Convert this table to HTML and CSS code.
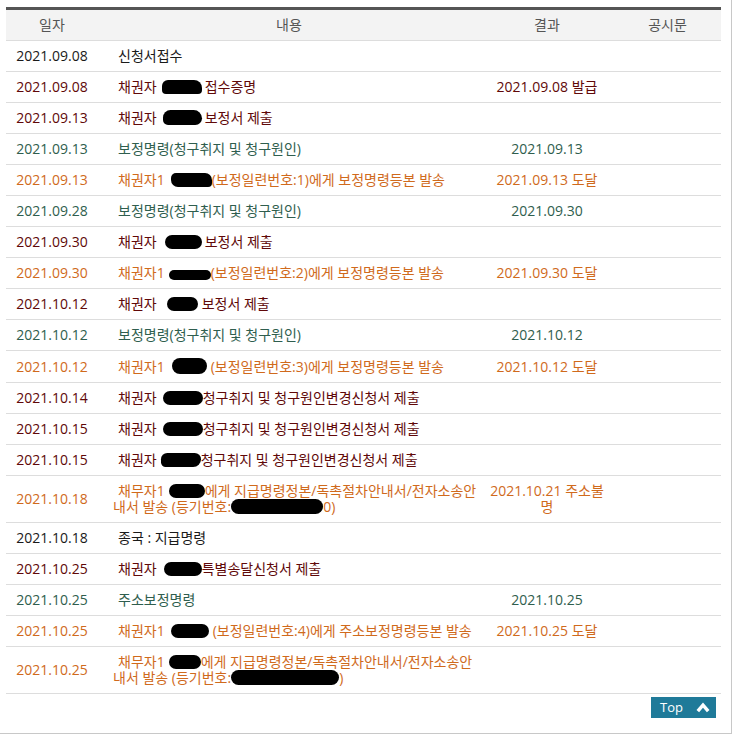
FILE: index.html
```html
<!DOCTYPE html>
<html lang="ko">
<head>
<meta charset="utf-8">
<title>진행내용</title>
<link rel="stylesheet" href="styles.css">
</head>
<body>
<div class="wrap">
  <table class="prog">
    <colgroup>
      <col class="c-date"><col class="c-text"><col class="c-res"><col class="c-doc">
    </colgroup>
    <thead>
      <tr><th>일자</th><th>내용</th><th>결과</th><th>공시문</th></tr>
    </thead>
    <tbody>
      <tr class="k-black"><td>2021.09.08</td><td class="txt">신청서접수</td><td></td><td></td></tr>
      <tr class="k-red"><td>2021.09.08</td><td class="txt">채권자<span class="blob b1"></span>접수증명</td><td>2021.09.08 발급</td><td></td></tr>
      <tr class="k-red"><td>2021.09.13</td><td class="txt">채권자<span class="blob b2"></span>보정서 제출</td><td></td><td></td></tr>
      <tr class="k-green"><td>2021.09.13</td><td class="txt">보정명령(청구취지 및 청구원인)</td><td>2021.09.13</td><td></td></tr>
      <tr class="k-orange"><td>2021.09.13</td><td class="txt">채권자1<span class="blob b3"></span>(보정일련번호:1)에게 보정명령등본 발송</td><td>2021.09.13 도달</td><td></td></tr>
      <tr class="k-green"><td>2021.09.28</td><td class="txt">보정명령(청구취지 및 청구원인)</td><td>2021.09.30</td><td></td></tr>
      <tr class="k-red"><td>2021.09.30</td><td class="txt">채권자<span class="blob b4"></span>보정서 제출</td><td></td><td></td></tr>
      <tr class="k-orange"><td>2021.09.30</td><td class="txt">채권자1<span class="blob b5"></span>(보정일련번호:2)에게 보정명령등본 발송</td><td>2021.09.30 도달</td><td></td></tr>
      <tr class="k-red"><td>2021.10.12</td><td class="txt">채권자<span class="blob b6"></span>보정서 제출</td><td></td><td></td></tr>
      <tr class="k-green"><td>2021.10.12</td><td class="txt">보정명령(청구취지 및 청구원인)</td><td>2021.10.12</td><td></td></tr>
      <tr class="k-orange"><td>2021.10.12</td><td class="txt">채권자1<span class="blob b7"></span>(보정일련번호:3)에게 보정명령등본 발송</td><td>2021.10.12 도달</td><td></td></tr>
      <tr class="k-red"><td>2021.10.14</td><td class="txt">채권자<span class="blob b8"></span>청구취지 및 청구원인변경신청서 제출</td><td></td><td></td></tr>
      <tr class="k-red"><td>2021.10.15</td><td class="txt">채권자<span class="blob b8"></span>청구취지 및 청구원인변경신청서 제출</td><td></td><td></td></tr>
      <tr class="k-red"><td>2021.10.15</td><td class="txt">채권자<span class="blob b9"></span>청구취지 및 청구원인변경신청서 제출</td><td></td><td></td></tr>
      <tr class="k-orange"><td>2021.10.18</td><td class="txt">채무자1<span class="blob b10"></span>에게 지급명령정본/독촉절차안내서/전자소송안내서 발송 (등기번호:<span class="blob b11"></span>0)</td><td>2021.10.21 주소불명</td><td></td></tr>
      <tr class="k-black"><td>2021.10.18</td><td class="txt">종국 : 지급명령</td><td></td><td></td></tr>
      <tr class="k-red"><td>2021.10.25</td><td class="txt">채권자<span class="blob b12"></span>특별송달신청서 제출</td><td></td><td></td></tr>
      <tr class="k-green"><td>2021.10.25</td><td class="txt">주소보정명령</td><td>2021.10.25</td><td></td></tr>
      <tr class="k-orange"><td>2021.10.25</td><td class="txt">채권자1<span class="blob b13"></span>(보정일련번호:4)에게 주소보정명령등본 발송</td><td>2021.10.25 도달</td><td></td></tr>
      <tr class="k-orange"><td>2021.10.25</td><td class="txt">채무자1<span class="blob b14"></span>에게 지급명령정본/독촉절차안내서/전자소송안내서 발송 (등기번호:<span class="blob b15"></span>)</td><td></td><td></td></tr>
    </tbody>
  </table>
  <div class="foot">
    <a class="top-btn" href="#">Top
      <svg class="chev" width="14" height="11" viewBox="0 0 14 11" aria-hidden="true"><polyline points="1.8,9.2 7,3.2 12.2,9.2" fill="none" stroke="#fff" stroke-width="3.4"/></svg>
    </a>
  </div>
</div>
</body>
</html>
```

FILE: styles.css
```css
html, body {
  margin: 0;
  padding: 0;
  background: #fff;
}
body {
  font-family: "Open Sans", "Noto Sans CJK KR", sans-serif;
  font-size: 14px;
  color: #222;
}
.wrap {
  width: 715px;
  padding: 7px 10px 15px 6px;
  border-right: 1px solid #c8c8c8;
  border-bottom: 1px solid #c8c8c8;
}
.prog {
  width: 715px;
  border-collapse: collapse;
  table-layout: fixed;
}
.c-date { width: 92px; }
.c-text { width: 382px; }
.c-res { width: 134px; }
.c-doc { width: 107px; }
.prog th {
  height: 30px;
  padding: 0;
  background: #f3f3f3;
  border-top: 3px solid #555;
  border-bottom: 1px solid #ddd;
  font-weight: normal;
  color: #555;
  line-height: 16px;
  text-align: center;
}
.prog td {
  padding: 7px 8px;
  line-height: 16px;
  border-bottom: 1px solid #ddd;
  text-align: center;
  vertical-align: middle;
}
.prog td.txt {
  text-align: left;
  padding: 7px 0 7px 15px;
  text-indent: 5px;
}
.k-black td { color: #1a1a1a; }
.k-red td { color: #600808; }
.k-green td { color: #2f5e4e; }
.k-orange td { color: #d06a1c; }
.blob {
  display: inline-block;
  height: 14px;
  background: #000;
  border-radius: 8px;
  vertical-align: -2px;
  text-indent: 0;
}
.b1 { width: 40px; margin: 0 3px 0 5px; border-radius: 6px 8px 4px 4px; }
.b2 { width: 39px; margin: 0 3px 0 6px; border-radius: 9px 10px 8px 6px; height: 15px; }
.b3 { width: 41px; margin: 0 0 0 6px; border-radius: 5px 7px 4px 7px; }
.b4 { width: 37px; margin: 0 3px 0 8px; border-radius: 7px; }
.b5 { width: 42px; margin: 0 0 0 4px; height: 10px; border-radius: 5px; }
.b6 { width: 31px; margin: 0 4px 0 10px; border-radius: 7px; }
.b7 { width: 35px; margin: 0 4px 0 7px; height: 16px; border-radius: 9px; }
.b8 { width: 40px; margin: 0 0 0 6px; border-radius: 8px; }
.b9 { width: 40px; margin: 0 0 0 4px; border-radius: 8px 8px 10px 6px; }
.b10 { width: 36px; margin: 0 0 0 4px; border-radius: 8px; }
.b11 { width: 92px; margin: 0 0 0 0; border-radius: 9px; height: 15px; }
.b12 { width: 38px; margin: 0 0 0 7px; border-radius: 7px; }
.b13 { width: 38px; margin: 0 4px 0 6px; border-radius: 7px; }
.b14 { width: 32px; margin: 0 0 0 4px; border-radius: 7px; }
.b15 { width: 108px; margin: 0; border-radius: 9px; height: 15px; }
.foot {
  display: flex;
  justify-content: flex-end;
  padding: 3px 5px 0 0;
}
.top-btn {
  display: flex;
  align-items: center;
  gap: 13px;
  height: 21px;
  padding: 0 6px 0 9px;
  background: #1f7a99;
  color: #fff;
  font-size: 13px;
  text-decoration: none;
  line-height: 21px;
}
.chev { display: block; }
```
